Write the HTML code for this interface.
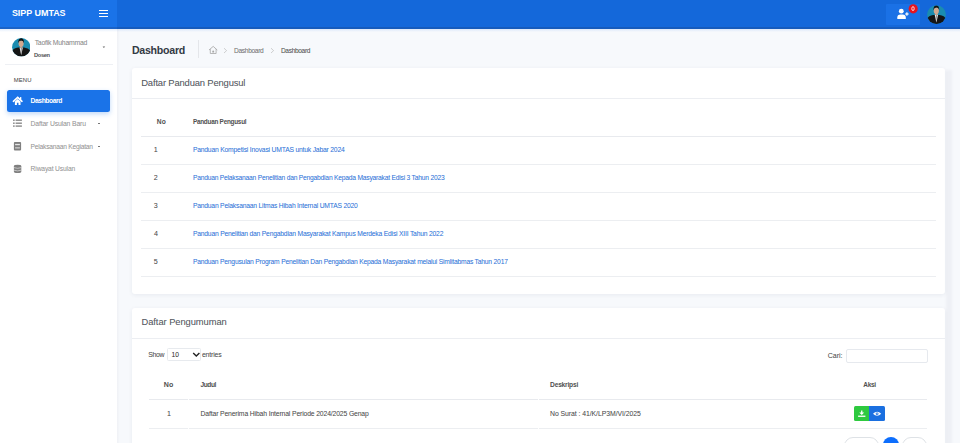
<!DOCTYPE html>
<html><head><meta charset="utf-8"><style>
*{margin:0;padding:0;box-sizing:border-box}
html,body{width:960px;height:443px;overflow:hidden;background:#f7f9fc;font-family:"Liberation Sans",sans-serif}
.t{position:absolute;white-space:nowrap}
.a{position:absolute}
</style></head><body>
<!-- header -->
<div class="a" style="left:0;top:0;width:117px;height:28.6px;background:#1a73e8"></div>
<div class="a" style="left:117px;top:0;width:843px;height:28.6px;background:#1468da"></div>
<div class="a" style="left:0;top:27px;width:960px;height:1.6px;background:rgba(30,45,80,.22)"></div>

<!-- hamburger -->
<div class="a" style="left:98.6px;top:9.8px;width:9.5px;height:1.2px;background:#fff"></div>
<div class="a" style="left:98.6px;top:12.9px;width:9.5px;height:1.2px;background:#fff"></div>
<div class="a" style="left:98.6px;top:16px;width:9.5px;height:1.2px;background:#fff"></div>
<!-- header button -->
<div class="a" style="left:886.2px;top:3.8px;width:34px;height:21.2px;background:#1a71e6;border-radius:1px"></div>
<svg class="a" style="left:880px;top:0" width="50" height="28" viewBox="880 0 50 28">
  <circle cx="901.3" cy="11.2" r="2.4" fill="#fff"/>
  <path d="M897.3 19.1 L897.3 17.6 Q897.3 14.4 900.4 14.4 L902.7 14.4 Q905.8 14.4 905.8 17.6 L905.8 19.1 Z" fill="#fff"/>
  <rect x="905.2" y="13.4" width="3.4" height="1.2" fill="#fff"/>
  <rect x="906.3" y="12.3" width="1.2" height="3.4" fill="#fff"/>
  <circle cx="913.2" cy="8.8" r="4.6" fill="#e8131d"/>
  <ellipse cx="913" cy="8.6" rx="1.2" ry="2" fill="none" stroke="#fff" stroke-width="0.8"/>
</svg>
<!-- header avatar -->
<svg class="a" style="left:927.2px;top:4.5px" width="19" height="19.2" viewBox="0 0 19 19">
  <defs><clipPath id="ca"><circle cx="9.5" cy="9.5" r="9.4"/></clipPath></defs>
  <g clip-path="url(#ca)">
    <rect width="19" height="19" fill="#1a8cb0"/>
    <path d="M0 19 L0 13.5 Q1.5 10.6 6.2 9.8 L12.4 9.8 Q17.5 10.6 19 13.5 L19 19 Z" fill="#151515"/>
    <path d="M7.7 9.6 L9.4 17.5 L11.1 9.6 Z" fill="#eaeaea"/>
    <path d="M9 10.2 L9.4 16.5 L9.9 10.2 Z" fill="#6a6a6a"/>
    <rect x="8.2" y="7.5" width="2.3" height="2.4" fill="#c9a08a"/>
    <ellipse cx="9.3" cy="5.6" rx="2.6" ry="3.4" fill="#d2a88f"/>
    <path d="M6.4 5.4 Q6.2 0.4 9.3 0.3 Q12.5 0.4 12.2 5.4 Q11.8 2.6 9.3 2.5 Q6.9 2.6 6.4 5.4 Z" fill="#121212"/>
  </g>
</svg>
<!-- sidebar -->
<div class="a" style="left:0;top:28.6px;width:117px;height:415px;background:#fff"></div>
<div class="a" style="left:117px;top:28.6px;width:3px;height:415px;background:linear-gradient(90deg,rgba(0,0,40,.03),rgba(0,0,40,0))"></div>
<div class="a" style="left:0;top:28.6px;width:960px;height:3px;background:linear-gradient(rgba(40,120,235,.13),rgba(40,120,235,0))"></div>
<svg class="a" style="left:11.8px;top:38.3px" width="18.6" height="18.6" viewBox="0 0 19 19">
  <defs><clipPath id="cb"><circle cx="9.5" cy="9.5" r="9.4"/></clipPath></defs>
  <g clip-path="url(#cb)">
    <rect width="19" height="19" fill="#1a8cb0"/>
    <path d="M0 19 L0 13.5 Q1.5 10.6 6.2 9.8 L12.4 9.8 Q17.5 10.6 19 13.5 L19 19 Z" fill="#151515"/>
    <path d="M7.7 9.6 L9.4 17.5 L11.1 9.6 Z" fill="#eaeaea"/>
    <path d="M9 10.2 L9.4 16.5 L9.9 10.2 Z" fill="#6a6a6a"/>
    <rect x="8.2" y="7.5" width="2.3" height="2.4" fill="#c9a08a"/>
    <ellipse cx="9.3" cy="5.6" rx="2.6" ry="3.4" fill="#d2a88f"/>
    <path d="M6.4 5.4 Q6.2 0.4 9.3 0.3 Q12.5 0.4 12.2 5.4 Q11.8 2.6 9.3 2.5 Q6.9 2.6 6.4 5.4 Z" fill="#121212"/>
  </g>
</svg>
<svg class="a" style="left:102px;top:46px" width="4" height="3" viewBox="0 0 4 3"><path d="M0.6 0.6 L3.2 0.6 L1.9 2 Z" fill="#666"/></svg>
<div class="a" style="left:5px;top:64px;width:107.5px;height:1px;background:#eef0f4"></div>
<!-- active menu -->
<div class="a" style="left:7px;top:90px;width:103.2px;height:21.8px;background:#1a73e8;border-radius:2.5px;box-shadow:0 2px 5px rgba(26,115,232,.28)"></div>
<svg class="a" style="left:12px;top:95px" width="12" height="11" viewBox="12 95 12 11">
  <path d="M13.4 101.3 L17.7 97.4 L22 101.3" stroke="#fff" stroke-width="1.6" fill="none" stroke-linecap="round" stroke-linejoin="miter"/>
  <rect x="20" y="97.1" width="1.3" height="2.6" fill="#fff"/>
  <path d="M14.9 101.4 L17.7 98.9 L20.5 101.4 L20.5 104.9 L18.5 104.9 L18.5 102.8 L16.9 102.8 L16.9 104.9 L14.9 104.9 Z" fill="#fff"/>
</svg>
<!-- list icon -->
<svg class="a" style="left:12px;top:118px" width="11" height="10" viewBox="12 118 11 10">
  <rect x="13" y="119.5" width="1.7" height="1.4" fill="#8a8a8a"/><rect x="15.6" y="119.5" width="6.3" height="1.4" fill="#8a8a8a"/>
  <rect x="13" y="122.5" width="1.7" height="1.4" fill="#8a8a8a"/><rect x="15.6" y="122.5" width="6.3" height="1.4" fill="#8a8a8a"/>
  <rect x="13" y="125.4" width="1.7" height="1.4" fill="#8a8a8a"/><rect x="15.6" y="125.4" width="6.3" height="1.4" fill="#8a8a8a"/>
</svg>
<!-- book icon -->
<svg class="a" style="left:12px;top:140px" width="11" height="12" viewBox="12 140 11 12">
  <rect x="13.9" y="141.9" width="7.2" height="8.5" rx="1" fill="#808080"/>
  <rect x="15.1" y="143.9" width="4.8" height="1.3" fill="#e6e6e6"/>
  <rect x="15.1" y="147.2" width="4.8" height="1.3" fill="#cfcfcf"/>
</svg>
<!-- db icon -->
<svg class="a" style="left:12px;top:163px" width="11" height="12" viewBox="12 163 11 12">
  <path d="M13.9 166.2 Q13.9 164.8 17.6 164.8 Q21.3 164.8 21.3 166.2 L21.3 171.8 Q21.3 173.1 17.6 173.1 Q13.9 173.1 13.9 171.8 Z" fill="#808080"/>
  <path d="M13.9 167.6 Q17.6 169 21.3 167.6" stroke="#e0e0e0" stroke-width="0.7" fill="none"/>
  <path d="M13.9 170.2 Q17.6 171.6 21.3 170.2" stroke="#e0e0e0" stroke-width="0.7" fill="none"/>
</svg>
<div class="a" style="left:98px;top:123px;width:2px;height:0.9px;background:#777"></div>
<div class="a" style="left:98px;top:146.3px;width:2px;height:0.9px;background:#777"></div>
<!-- breadcrumb -->
<div class="a" style="left:197.5px;top:40.2px;width:1px;height:18.3px;background:#e4e6ea"></div>
<svg class="a" style="left:207px;top:44px" width="12" height="12" viewBox="207 44 12 12">
  <path d="M209.3 49.8 L213.2 46.4 L217 49.8" stroke="#a6a6a6" stroke-width="0.85" fill="none" stroke-linecap="round" stroke-linejoin="round"/>
  <path d="M210.3 49.1 L210.3 53.5 L216.1 53.5 L216.1 49.1" stroke="#a6a6a6" stroke-width="0.8" fill="none"/>
  <path d="M212.3 52.6 L212.3 51.6 Q212.3 50.6 213.2 50.6 Q214.1 50.6 214.1 51.6 L214.1 52.6 Z" fill="#a6a6a6"/>
</svg>
<svg class="a" style="left:222px;top:47px" width="6" height="7" viewBox="222 47 6 7"><path d="M224 48.2 L226.6 50.6 L224 53" stroke="#bbbbbb" stroke-width="0.7" fill="none"/></svg>
<svg class="a" style="left:269px;top:47px" width="6" height="7" viewBox="269 47 6 7"><path d="M271 48.2 L273.6 50.6 L271 53" stroke="#bbbbbb" stroke-width="0.7" fill="none"/></svg>
<!-- card 1 -->
<div class="a" style="left:131.8px;top:68px;width:813.3px;height:225.8px;background:#fff;border-radius:3px;box-shadow:0 1px 4px rgba(30,40,80,.07)"></div>
<div class="a" style="left:131.8px;top:97.8px;width:813.3px;height:1px;background:#eceef2"></div>
<div class="a" style="left:141.2px;top:135.8px;width:794.4px;height:1px;background:#e8eaee"></div>
<div class="a" style="left:141.2px;top:163.8px;width:794.4px;height:1px;background:#eceef1"></div>
<div class="a" style="left:141.2px;top:191.9px;width:794.4px;height:1px;background:#eceef1"></div>
<div class="a" style="left:141.2px;top:219.9px;width:794.4px;height:1px;background:#eceef1"></div>
<div class="a" style="left:141.2px;top:248px;width:794.4px;height:1px;background:#eceef1"></div>
<div class="a" style="left:141.2px;top:275.8px;width:794.4px;height:1px;background:#eceef1"></div>
<!-- card 2 -->
<div class="a" style="left:131.8px;top:308.4px;width:813.3px;height:200px;background:#fff;border-radius:3px;box-shadow:0 1px 4px rgba(30,40,80,.07)"></div>
<div class="a" style="left:131.8px;top:337.7px;width:813.3px;height:1px;background:#eceef2"></div>
<div class="a" style="left:166.5px;top:348.2px;width:34px;height:12.5px;border:0.8px solid #e7eaee;border-radius:1.5px;background:#fff"></div>
<svg class="a" style="left:191px;top:351px" width="10" height="7" viewBox="191 351 10 7"><path d="M193.2 353 L196.3 356.1 L199.4 353" stroke="#222" stroke-width="1.4" fill="none"/></svg>
<div class="a" style="left:845.6px;top:348.6px;width:82.6px;height:14px;border:0.8px solid #e6e9ee;border-radius:2px;background:#fff"></div>
<!-- table 2 lines -->
<div class="a" style="left:149.1px;top:398.6px;width:39.3px;height:1px;background:#e8eaee"></div>
<div class="a" style="left:189.2px;top:398.6px;width:348.5px;height:1px;background:#e8eaee"></div>
<div class="a" style="left:538.5px;top:398.6px;width:272px;height:1px;background:#e8eaee"></div>
<div class="a" style="left:811.3px;top:398.6px;width:116.2px;height:1px;background:#e8eaee"></div>
<div class="a" style="left:149.1px;top:427.9px;width:39.3px;height:1px;background:#eceef1"></div>
<div class="a" style="left:189.2px;top:427.9px;width:348.5px;height:1px;background:#eceef1"></div>
<div class="a" style="left:538.5px;top:427.9px;width:272px;height:1px;background:#eceef1"></div>
<div class="a" style="left:811.3px;top:427.9px;width:116.2px;height:1px;background:#eceef1"></div>
<!-- action buttons -->
<div class="a" style="left:854.1px;top:406.3px;width:16px;height:15.2px;background:#2ec93f;border-radius:1.5px 0 0 1.5px"></div>
<div class="a" style="left:868.5px;top:406.3px;width:16.7px;height:15.2px;background:#1a6fe0;border-radius:0 1.5px 1.5px 0"></div>
<svg class="a" style="left:856px;top:409px" width="12" height="10" viewBox="856 409 12 10">
  <path d="M861.1 410.6 L862.4 410.6 L862.4 412.6 L864.2 412.6 L861.75 415.1 L859.3 412.6 L861.1 412.6 Z" fill="#fff"/>
  <rect x="858.1" y="415.6" width="7.3" height="1.3" fill="#fff"/>
</svg>
<svg class="a" style="left:871px;top:409px" width="12" height="10" viewBox="871 409 12 10">
  <path d="M873 413.8 Q877.1 409.8 881.2 413.8 Q877.1 417.8 873 413.8 Z" fill="#fff"/>
  <circle cx="877.1" cy="413.8" r="1.4" fill="#1a6fe0"/>
  <circle cx="877.1" cy="413.8" r="0.6" fill="#fff"/>
</svg>
<!-- pagination -->
<div class="a" style="left:844px;top:437.1px;width:35.3px;height:18px;border:0.8px solid #dee2e6;border-radius:9px;background:#fff"></div>
<div class="a" style="left:882.9px;top:437.2px;width:15.9px;height:15.9px;border-radius:50%;background:#0d6efd"></div>
<div class="a" style="left:901.7px;top:437.1px;width:25px;height:18px;border:0.8px solid #dee2e6;border-radius:9px;background:#fff"></div>
<!-- right strip -->
<div class="a" style="left:945.5px;top:70px;width:6.5px;height:380px;background:rgba(0,0,50,.035);filter:blur(1px)"></div>

<div class="t" style="left:11.88px;top:9.31px;font-size:8.97px;line-height:8.97px;letter-spacing:-0.029px;font-weight:700;color:#ffffff">SIPP UMTAS</div>
<div class="t" style="left:34.63px;top:40.30px;font-size:6.85px;line-height:6.85px;letter-spacing:-0.228px;font-weight:400;color:#8f8f8f;text-shadow:0 0 0.5px rgba(143,143,143,0.3)">Taofik Muhammad</div>
<div class="t" style="left:34.07px;top:52.76px;font-size:5.72px;line-height:5.72px;letter-spacing:-0.356px;font-weight:700;color:#505050">Dosen</div>
<div class="t" style="left:13.86px;top:77.57px;font-size:5.89px;line-height:5.89px;letter-spacing:0.072px;font-weight:400;color:#555555;text-shadow:0 0 0.5px rgba(85,85,85,0.3)">MENU</div>
<div class="t" style="left:30.50px;top:98.01px;font-size:6.72px;line-height:6.72px;letter-spacing:-0.399px;font-weight:700;color:#ffffff">Dashboard</div>
<div class="t" style="left:30.59px;top:120.93px;font-size:6.81px;line-height:6.81px;letter-spacing:-0.145px;font-weight:400;color:#9b9b9b;text-shadow:0 0 0.5px rgba(155,155,155,0.3)">Daftar Usulan Baru</div>
<div class="t" style="left:30.60px;top:143.66px;font-size:6.67px;line-height:6.67px;letter-spacing:-0.222px;font-weight:400;color:#9b9b9b;text-shadow:0 0 0.5px rgba(155,155,155,0.3)">Pelaksanaan Kegiatan</div>
<div class="t" style="left:30.60px;top:166.23px;font-size:6.70px;line-height:6.70px;letter-spacing:-0.141px;font-weight:400;color:#9b9b9b;text-shadow:0 0 0.5px rgba(155,155,155,0.3)">Riwayat Usulan</div>
<div class="t" style="left:131.90px;top:45.21px;font-size:10.62px;line-height:10.62px;letter-spacing:-0.258px;font-weight:700;color:#333a44">Dashboard</div>
<div class="t" style="left:234.10px;top:48.09px;font-size:6.63px;line-height:6.63px;letter-spacing:-0.347px;font-weight:400;color:#7a7a7a;text-shadow:0 0 0.5px rgba(122,122,122,0.3)">Dashboard</div>
<div class="t" style="left:280.95px;top:48.10px;font-size:6.61px;line-height:6.61px;letter-spacing:-0.353px;font-weight:400;color:#5a5a5a;text-shadow:0 0 0.5px rgba(90,90,90,0.3)">Dashboard</div>
<div class="t" style="left:141.24px;top:78.33px;font-size:9.42px;line-height:9.42px;letter-spacing:-0.161px;font-weight:400;color:#5a5e66;text-shadow:0 0 0.5px rgba(90,94,102,0.3)">Daftar Panduan Pengusul</div>
<div class="t" style="left:156.80px;top:118.94px;font-size:6.69px;line-height:6.69px;letter-spacing:0.110px;font-weight:700;color:#505050">No</div>
<div class="t" style="left:192.92px;top:119.20px;font-size:6.38px;line-height:6.38px;letter-spacing:-0.247px;font-weight:700;color:#505050">Panduan Pengusul</div>
<div class="t" style="left:171.50px;top:351.89px;font-size:6.69px;line-height:6.69px;letter-spacing:0.114px;font-weight:400;color:#3a3a3a;text-shadow:0 0 0.5px rgba(58,58,58,0.3)">10</div>
<div class="t" style="left:153.67px;top:146.67px;font-size:7.12px;line-height:7.12px;letter-spacing:0.000px;font-weight:400;color:#555555;text-shadow:0 0 0.5px rgba(85,85,85,0.3)">1</div>
<div class="t" style="left:192.89px;top:147.00px;font-size:6.74px;line-height:6.74px;letter-spacing:-0.183px;font-weight:400;color:#3b7bda;text-shadow:0 0 0.5px rgba(59,123,218,0.3)">Panduan Kompetisi Inovasi UMTAS untuk Jabar 2024</div>
<div class="t" style="left:153.84px;top:174.67px;font-size:7.12px;line-height:7.12px;letter-spacing:0.000px;font-weight:400;color:#555555;text-shadow:0 0 0.5px rgba(85,85,85,0.3)">2</div>
<div class="t" style="left:192.90px;top:175.05px;font-size:6.68px;line-height:6.68px;letter-spacing:-0.206px;font-weight:400;color:#3b7bda;text-shadow:0 0 0.5px rgba(59,123,218,0.3)">Panduan Pelaksanaan Penelitian dan Pengabdian Kepada Masyarakat Edisi 3 Tahun 2023</div>
<div class="t" style="left:153.84px;top:202.67px;font-size:7.12px;line-height:7.12px;letter-spacing:0.000px;font-weight:400;color:#555555;text-shadow:0 0 0.5px rgba(85,85,85,0.3)">3</div>
<div class="t" style="left:192.90px;top:203.01px;font-size:6.72px;line-height:6.72px;letter-spacing:-0.192px;font-weight:400;color:#3b7bda;text-shadow:0 0 0.5px rgba(59,123,218,0.3)">Panduan Pelaksanaan Litmas Hibah Internal UMTAS 2020</div>
<div class="t" style="left:154.02px;top:230.67px;font-size:7.12px;line-height:7.12px;letter-spacing:0.000px;font-weight:400;color:#555555;text-shadow:0 0 0.5px rgba(85,85,85,0.3)">4</div>
<div class="t" style="left:192.90px;top:231.01px;font-size:6.72px;line-height:6.72px;letter-spacing:-0.187px;font-weight:400;color:#3b7bda;text-shadow:0 0 0.5px rgba(59,123,218,0.3)">Panduan Penelitian dan Pengabdian Masyarakat Kampus Merdeka Edisi XIII Tahun 2022</div>
<div class="t" style="left:153.84px;top:258.67px;font-size:7.12px;line-height:7.12px;letter-spacing:0.000px;font-weight:400;color:#555555;text-shadow:0 0 0.5px rgba(85,85,85,0.3)">5</div>
<div class="t" style="left:192.90px;top:259.02px;font-size:6.71px;line-height:6.71px;letter-spacing:-0.195px;font-weight:400;color:#3b7bda;text-shadow:0 0 0.5px rgba(59,123,218,0.3)">Panduan Pengusulan Program Penelitian Dan Pengabdian Kepada Masyarakat melalui Simlitabmas Tahun 2017</div>
<div class="t" style="left:141.50px;top:318.19px;font-size:9.35px;line-height:9.35px;letter-spacing:-0.057px;font-weight:400;color:#5a5e66;text-shadow:0 0 0.5px rgba(90,94,102,0.3)">Daftar Pengumuman</div>
<div class="t" style="left:148.16px;top:351.69px;font-size:6.87px;line-height:6.87px;letter-spacing:-0.309px;font-weight:400;color:#555555;text-shadow:0 0 0.5px rgba(85,85,85,0.3)">Show</div>
<div class="t" style="left:201.95px;top:351.65px;font-size:6.91px;line-height:6.91px;letter-spacing:-0.167px;font-weight:400;color:#555555;text-shadow:0 0 0.5px rgba(85,85,85,0.3)">entries</div>
<div class="t" style="left:827.75px;top:352.45px;font-size:7.03px;line-height:7.03px;letter-spacing:-0.045px;font-weight:400;color:#555555;text-shadow:0 0 0.5px rgba(85,85,85,0.3)">Cari:</div>
<div class="t" style="left:163.87px;top:381.01px;font-size:7.07px;line-height:7.07px;letter-spacing:-0.062px;font-weight:700;color:#505050">No</div>
<div class="t" style="left:200.43px;top:381.91px;font-size:6.60px;line-height:6.60px;letter-spacing:-0.388px;font-weight:700;color:#505050">Judul</div>
<div class="t" style="left:550.10px;top:381.75px;font-size:6.67px;line-height:6.67px;letter-spacing:-0.229px;font-weight:700;color:#505050">Deskripsi</div>
<div class="t" style="left:863.24px;top:381.69px;font-size:6.51px;line-height:6.51px;letter-spacing:-0.294px;font-weight:700;color:#505050">Aksi</div>
<div class="t" style="left:166.97px;top:410.77px;font-size:7.12px;line-height:7.12px;letter-spacing:0.000px;font-weight:400;color:#555555;text-shadow:0 0 0.5px rgba(85,85,85,0.3)">1</div>
<div class="t" style="left:200.59px;top:410.93px;font-size:6.82px;line-height:6.82px;letter-spacing:-0.142px;font-weight:400;color:#555555;text-shadow:0 0 0.5px rgba(85,85,85,0.3)">Daftar Penerima Hibah Internal Periode 2024/2025 Genap</div>
<div class="t" style="left:550.09px;top:411.00px;font-size:6.86px;line-height:6.86px;letter-spacing:-0.058px;font-weight:400;color:#555555;text-shadow:0 0 0.5px rgba(85,85,85,0.3)">No Surat : 41/K/LP3M/VI/2025</div>
</body></html>
